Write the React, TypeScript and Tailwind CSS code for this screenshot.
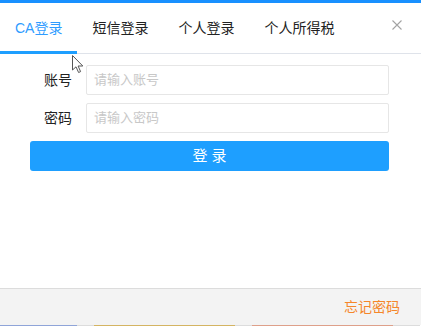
import React from "react";

const font = { fontFamily: '"Liberation Sans", "Noto Sans CJK SC", sans-serif' };

export default function App() {
  const tabs = ["CA登录", "短信登录", "个人登录", "个人所得税"];
  return (
    <div className="relative flex h-[327px] w-[421px] flex-col bg-white" style={font}>
      <div className="h-[3px] bg-[#1890ff]" />
      <div className="relative flex h-[51px] border-b border-[#dfe3ea]">
        {tabs.map((t, i) => (
          <div
            key={t}
            className={`relative flex h-full items-center px-[15px] text-[14px] ${
              i === 0 ? "text-[#2f9cff]" : "text-[#222]"
            }`}
          >
            {t}
            {i === 0 && <div className="absolute bottom-[-1px] left-0 right-0 h-[3px] bg-[#1e9fff]" />}
          </div>
        ))}
        <svg className="absolute right-[19px] top-[17px]" width="10" height="10" viewBox="0 0 10 10">
          <path d="M0.5 0.5 L9.5 9.5 M9.5 0.5 L0.5 9.5" stroke="#a3a3a3" strokeWidth="1.1" fill="none" />
        </svg>
      </div>
      <div className="flex flex-col gap-2 pl-[30px] pr-[32px] pt-[11px]">
        {[
          ["账号", "请输入账号"],
          ["密码", "请输入密码"],
        ].map(([l, p]) => (
          <div key={l} className="flex h-[30px] items-center">
            <div className="w-[56px] text-center text-[14px] text-[#222]">{l}</div>
            <div className="flex h-full flex-1 items-center rounded-[2px] border border-[#e6e6e6] pl-[7px] text-[13px] text-[#c8c8c8]">
              {p}
            </div>
          </div>
        ))}
        <div className="flex h-[30px] items-center justify-center rounded-[3px] bg-[#1e9fff] text-[15px] text-white">
          登 录
        </div>
      </div>
      <div className="flex-1" />
      <div className="flex h-[37px] items-center justify-end border-t border-[#dcdcdc] bg-[#f3f3f3] pr-[21px] text-[14px] text-[#f5862a]">
        忘记密码
      </div>
      <div className="flex h-px w-[420px] bg-[#dcdcdc]">
        <div className="w-[77px] bg-[#8fa4d8]" />
        <div className="w-[17px]" />
        <div className="w-[141px] bg-[#d4b462]" />
        <div className="w-[17px]" />
        <div className="w-[141px] bg-[#dea08a]" />
      </div>
      <div className="h-px" />
      <svg className="absolute left-[72px] top-[55px]" width="13" height="19" viewBox="0 0 13 19">
        <path d="M0.5 0.5 L0.5 15 L4 11.8 L6.6 17.5 L8.6 16.6 L6.1 11 L10.8 11 Z" fill="#fff" stroke="#555" strokeWidth="1" strokeLinejoin="round" />
      </svg>
    </div>
  );
}
